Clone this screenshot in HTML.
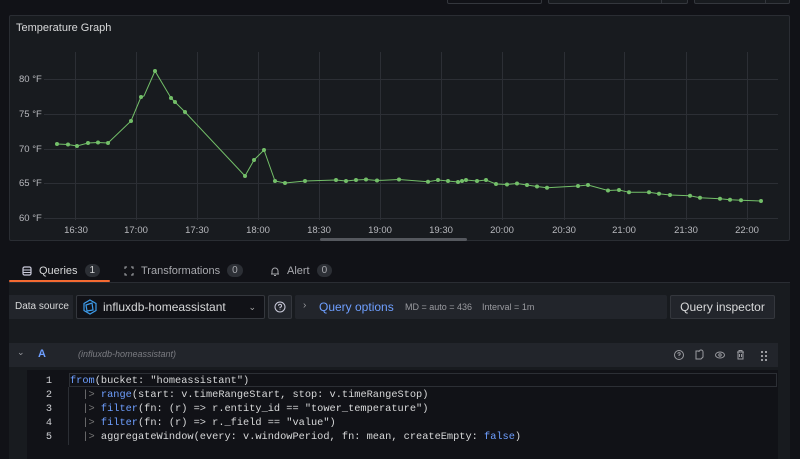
<!DOCTYPE html>
<html style="overflow:hidden;width:800px;height:459px"><head><style>
*{margin:0;padding:0;box-sizing:border-box}
body{width:800px;height:459px;background:#111217;font-family:"Liberation Sans",sans-serif;color:#ccccdc;position:relative;overflow:hidden;font-size:12px}
.a{position:absolute}
.mono{font-family:"Liberation Mono",monospace;font-size:10.3px;white-space:pre;color:#d8d9da}
.kw{color:#6e9fff}
</style></head><body>
<div class="a" style="left:447px;top:-6px;width:95px;height:10px;border:1px solid #34373d;border-radius:2px"></div>
<div class="a" style="left:548px;top:-6px;width:140px;height:10px;border:1px solid #34373d;background:#181b1f;border-radius:2px"></div>
<div class="a" style="left:661px;top:-6px;width:1px;height:10px;background:#34373d"></div>
<div class="a" style="left:694px;top:-6px;width:96px;height:10px;border:1px solid #34373d;background:#181b1f;border-radius:2px"></div>
<div class="a" style="left:765px;top:-6px;width:1px;height:10px;background:#34373d"></div>
<!-- panel -->
<div class="a" style="left:9px;top:15px;width:781px;height:226px;background:#181b1f;border:1px solid #2a2d33;border-radius:2px"></div>
<div class="a" style="left:16px;top:22px;font-size:11px;color:#d8d9da">Temperature Graph</div>
<svg class="a" style="left:0;top:0" width="800" height="250">
<g stroke="#2c2f35" stroke-width="1">
<line x1="44" y1="79.5" x2="778" y2="79.5"/><line x1="44" y1="114.5" x2="778" y2="114.5"/><line x1="44" y1="149.5" x2="778" y2="149.5"/><line x1="44" y1="183.5" x2="778" y2="183.5"/><line x1="44" y1="218.5" x2="778" y2="218.5"/>
<line x1="75.5" y1="52" x2="75.5" y2="220"/><line x1="136.5" y1="52" x2="136.5" y2="220"/><line x1="197.5" y1="52" x2="197.5" y2="220"/><line x1="258.5" y1="52" x2="258.5" y2="220"/><line x1="319.5" y1="52" x2="319.5" y2="220"/><line x1="380.5" y1="52" x2="380.5" y2="220"/><line x1="441.5" y1="52" x2="441.5" y2="220"/><line x1="502.5" y1="52" x2="502.5" y2="220"/><line x1="564.5" y1="52" x2="564.5" y2="220"/><line x1="624.5" y1="52" x2="624.5" y2="220"/><line x1="686.5" y1="52" x2="686.5" y2="220"/><line x1="747.5" y1="52" x2="747.5" y2="220"/>
</g>
<g font-family="Liberation Sans" font-size="9.5" fill="#b8b9be">
<text x="19" y="82">80 °F</text><text x="19" y="117">75 °F</text><text x="19" y="152">70 °F</text><text x="19" y="186">65 °F</text><text x="19" y="221">60 °F</text>
<g text-anchor="middle"><text x="76" y="233">16:30</text><text x="136" y="233">17:00</text><text x="197" y="233">17:30</text><text x="258" y="233">18:00</text><text x="319" y="233">18:30</text><text x="380" y="233">19:00</text><text x="441" y="233">19:30</text><text x="502" y="233">20:00</text><text x="564" y="233">20:30</text><text x="624" y="233">21:00</text><text x="686" y="233">21:30</text><text x="747" y="233">22:00</text></g>
</g>
<polyline fill="none" stroke="#73bf69" stroke-width="1" points="57,144 68,144.5 77,146 88,143 98,142.5 108,143 131,121 141,97 144,96 155,71 171,98 175,102 185,112 245,176 254,160 264,150 275,181 285,183 305,181 336,180 346,181 356,180 366,179.5 377,180.5 399,179.5 428,181.7 438,180 448,181 458,182 462,181 466,180 477,181 486,180 496,184 507,184.5 517,183.5 527,185 537,186.5 547,187.7 578,186 588,185 608,190.5 619,190 629,192.3 649,192.3 659,193.7 670,195 690,195.7 700,197.7 720,198.7 730,199.7 741,200.3 761,201"/>
<g fill="#73bf69">
<circle cx="57" cy="144" r="2"/><circle cx="68" cy="144.5" r="2"/><circle cx="77" cy="146" r="2"/><circle cx="88" cy="143" r="2"/><circle cx="98" cy="142.5" r="2"/><circle cx="108" cy="143" r="2"/><circle cx="131" cy="121" r="2"/><circle cx="141" cy="97" r="2"/><circle cx="155" cy="71" r="2"/><circle cx="171" cy="98" r="2"/><circle cx="175" cy="102" r="2"/><circle cx="185" cy="112" r="2"/><circle cx="245" cy="176" r="2"/><circle cx="254" cy="160" r="2"/><circle cx="264" cy="150" r="2"/><circle cx="275" cy="181" r="2"/><circle cx="285" cy="183" r="2"/><circle cx="305" cy="181" r="2"/><circle cx="336" cy="180" r="2"/><circle cx="346" cy="181" r="2"/><circle cx="356" cy="180" r="2"/><circle cx="366" cy="179.5" r="2"/><circle cx="377" cy="180.5" r="2"/><circle cx="399" cy="179.5" r="2"/><circle cx="428" cy="181.7" r="2"/><circle cx="438" cy="180" r="2"/><circle cx="448" cy="181" r="2"/><circle cx="458" cy="182" r="2"/><circle cx="462" cy="181" r="2"/><circle cx="466" cy="180" r="2"/><circle cx="477" cy="181" r="2"/><circle cx="486" cy="180" r="2"/><circle cx="496" cy="184" r="2"/><circle cx="507" cy="184.5" r="2"/><circle cx="517" cy="183.5" r="2"/><circle cx="527" cy="185" r="2"/><circle cx="537" cy="186.5" r="2"/><circle cx="547" cy="187.7" r="2"/><circle cx="578" cy="186" r="2"/><circle cx="588" cy="185" r="2"/><circle cx="608" cy="190.5" r="2"/><circle cx="619" cy="190" r="2"/><circle cx="629" cy="192.3" r="2"/><circle cx="649" cy="192.3" r="2"/><circle cx="659" cy="193.7" r="2"/><circle cx="670" cy="195" r="2"/><circle cx="690" cy="195.7" r="2"/><circle cx="700" cy="197.7" r="2"/><circle cx="720" cy="198.7" r="2"/><circle cx="730" cy="199.7" r="2"/><circle cx="741" cy="200.3" r="2"/><circle cx="761" cy="201" r="2"/>
</g>
<rect x="320" y="238" width="147" height="3" rx="1.5" fill="#55585e"/>
</svg>
<!-- tabs -->
<div class="a" style="left:22px;top:264px;font-size:11px;color:#d8d9da;display:flex;align-items:center">
<svg width="10" height="10" viewBox="0 0 10 10" style="margin-right:7px"><rect x="1" y="1" width="8" height="8" rx="1.5" fill="none" stroke="#ccccdc" stroke-width="1.2"/><line x1="1" y1="4" x2="9" y2="4" stroke="#ccccdc"/><line x1="1" y1="6.5" x2="9" y2="6.5" stroke="#ccccdc"/></svg>Queries<span style="margin-left:7px;background:#2c2f35;border-radius:8px;padding:1px 5px;font-size:10px">1</span></div>
<div class="a" style="left:124px;top:264px;font-size:11px;color:#a8a9ae;display:flex;align-items:center">
<svg width="10" height="10" viewBox="0 0 10 10" style="margin-right:7px" stroke="#a8a9ae" fill="none"><path d="M1 3V1H3M7 1H9V3M9 7V9H7M3 9H1V7"/></svg>Transformations<span style="margin-left:7px;background:#2c2f35;border-radius:8px;padding:1px 5px;font-size:10px">0</span></div>
<div class="a" style="left:270px;top:264px;font-size:11px;color:#a8a9ae;display:flex;align-items:center">
<svg width="10" height="10" viewBox="0 0 10 10" style="margin-right:7px" stroke="#a8a9ae" fill="none"><path d="M2 8V5A3 3 0 0 1 8 5V8ZM1 8H9M4 9.5H6"/></svg>Alert<span style="margin-left:7px;background:#2c2f35;border-radius:8px;padding:1px 5px;font-size:10px">0</span></div>
<div class="a" style="left:9px;top:280px;width:101px;height:2px;background:#f46a32;border-radius:1px"></div>
<!-- query area -->
<div class="a" style="left:9px;top:282px;width:781px;height:177px;background:#181b1f;border-top:1px solid #2a2d33"></div>
<div class="a" style="left:9px;top:295px;width:64px;height:24px;background:#22252b;font-size:10px;color:#d8d9da;line-height:24px;padding-left:6px">Data source</div>
<div class="a" style="left:76px;top:295px;width:189px;height:24px;border:1px solid #34373d;background:#111217;border-radius:2px;font-size:12px;color:#d8d9da;line-height:22px;padding-left:26px">influxdb-homeassistant<span style="position:absolute;right:8px;top:0;font-size:9px;color:#aaa">⌄</span></div>
<svg class="a" style="left:82px;top:299px" width="16" height="16" viewBox="0 0 16 16" fill="none" stroke="#3d9be9" stroke-width="1.2"><path d="M8 1L14 4.5V11.5L8 15L2 11.5V4.5Z"/><path d="M4 6L10 4L11 11L5 12Z"/></svg>
<div class="a" style="left:268px;top:295px;width:24px;height:24px;background:#22252b;border:1px solid #34373d;border-radius:2px"></div>
<svg class="a" style="left:274px;top:301px" width="12" height="12" viewBox="0 0 12 12" fill="none" stroke="#ccccdc"><circle cx="6" cy="6" r="5"/><path d="M4.5 4.8A1.5 1.5 0 1 1 6 6.3V7.2M6 8.5V9"/></svg>
<div class="a" style="left:295px;top:295px;width:372px;height:24px;background:#22252b;border-radius:2px"></div>
<div class="a" style="left:303px;top:300px;font-size:10px;color:#9a9ba0">›</div>
<div class="a" style="left:319px;top:300px;font-size:12px;color:#6e9fff">Query options</div>
<div class="a" style="left:405px;top:302px;font-size:9px;color:#9a9ba0">MD = auto = 436&nbsp;&nbsp;&nbsp;&nbsp;Interval = 1m</div>
<div class="a" style="left:670px;top:295px;width:105px;height:24px;background:#22252b;border:1px solid #34373d;border-radius:2px;font-size:12px;color:#d8d9da;text-align:center;line-height:22px">Query inspector</div>
<!-- query row -->
<div class="a" style="left:9px;top:343px;width:769px;height:24px;background:#22252b"></div>
<div class="a" style="left:17px;top:347px;font-size:9px;color:#9a9ba0">⌄</div>
<div class="a" style="left:38px;top:348px;font-size:11px;color:#6e9fff;font-weight:bold">A</div>
<div class="a" style="left:78px;top:349px;font-size:9px;color:#7b7c82;font-style:italic">(influxdb-homeassistant)</div>
<svg class="a" style="left:672px;top:348px" width="100" height="14" viewBox="0 0 100 14" fill="none" stroke="#9a9ba0" stroke-width="1">
<circle cx="7" cy="7" r="4.5"/><path d="M5.8 5.8A1.2 1.2 0 1 1 7 7V8M7 9.2V9.6"/>
<path d="M24 3V11H29L31 9V4A2 2 0 0 0 27 4V3Z"/>
<ellipse cx="48" cy="7" rx="4.5" ry="3"/><circle cx="48" cy="7" r="1.2"/>
<path d="M65 4H72M67 4V2.5H70V4M66 4V11H71V4M67.5 6V9M69.5 6V9"/>
<g fill="#9a9ba0" stroke="none"><rect x="89" y="3" width="2" height="2"/><rect x="93" y="3" width="2" height="2"/><rect x="89" y="7" width="2" height="2"/><rect x="93" y="7" width="2" height="2"/><rect x="89" y="11" width="2" height="2"/><rect x="93" y="11" width="2" height="2"/></g>
</svg>
<!-- editor -->
<div class="a" style="left:27px;top:370px;width:751px;height:89px;background:#111217"></div>
<div class="a" style="left:69px;top:373px;width:708px;height:14px;border:1px solid #2c2f35"></div>
<div class="a" style="left:68px;top:387px;width:1px;height:58px;background:#2c2f35"></div>
<div class="a mono" style="left:40px;top:374px;line-height:14px;color:#cfd0d4;text-align:right;width:12px">1
2
3
4
5</div>
<div class="a mono" style="left:70px;top:374px;line-height:14px"><span class="kw">from</span>(bucket: "homeassistant")
  <span style="color:#777">|&gt;</span> <span class="kw">range</span>(start: v.timeRangeStart, stop: v.timeRangeStop)
  <span style="color:#777">|&gt;</span> <span class="kw">filter</span>(fn: (r) =&gt; r.entity_id == "tower_temperature")
  <span style="color:#777">|&gt;</span> <span class="kw">filter</span>(fn: (r) =&gt; r._field == "value")
  <span style="color:#777">|&gt;</span> aggregateWindow(every: v.windowPeriod, fn: mean, createEmpty: <span class="kw">false</span>)</div>
</body></html>
